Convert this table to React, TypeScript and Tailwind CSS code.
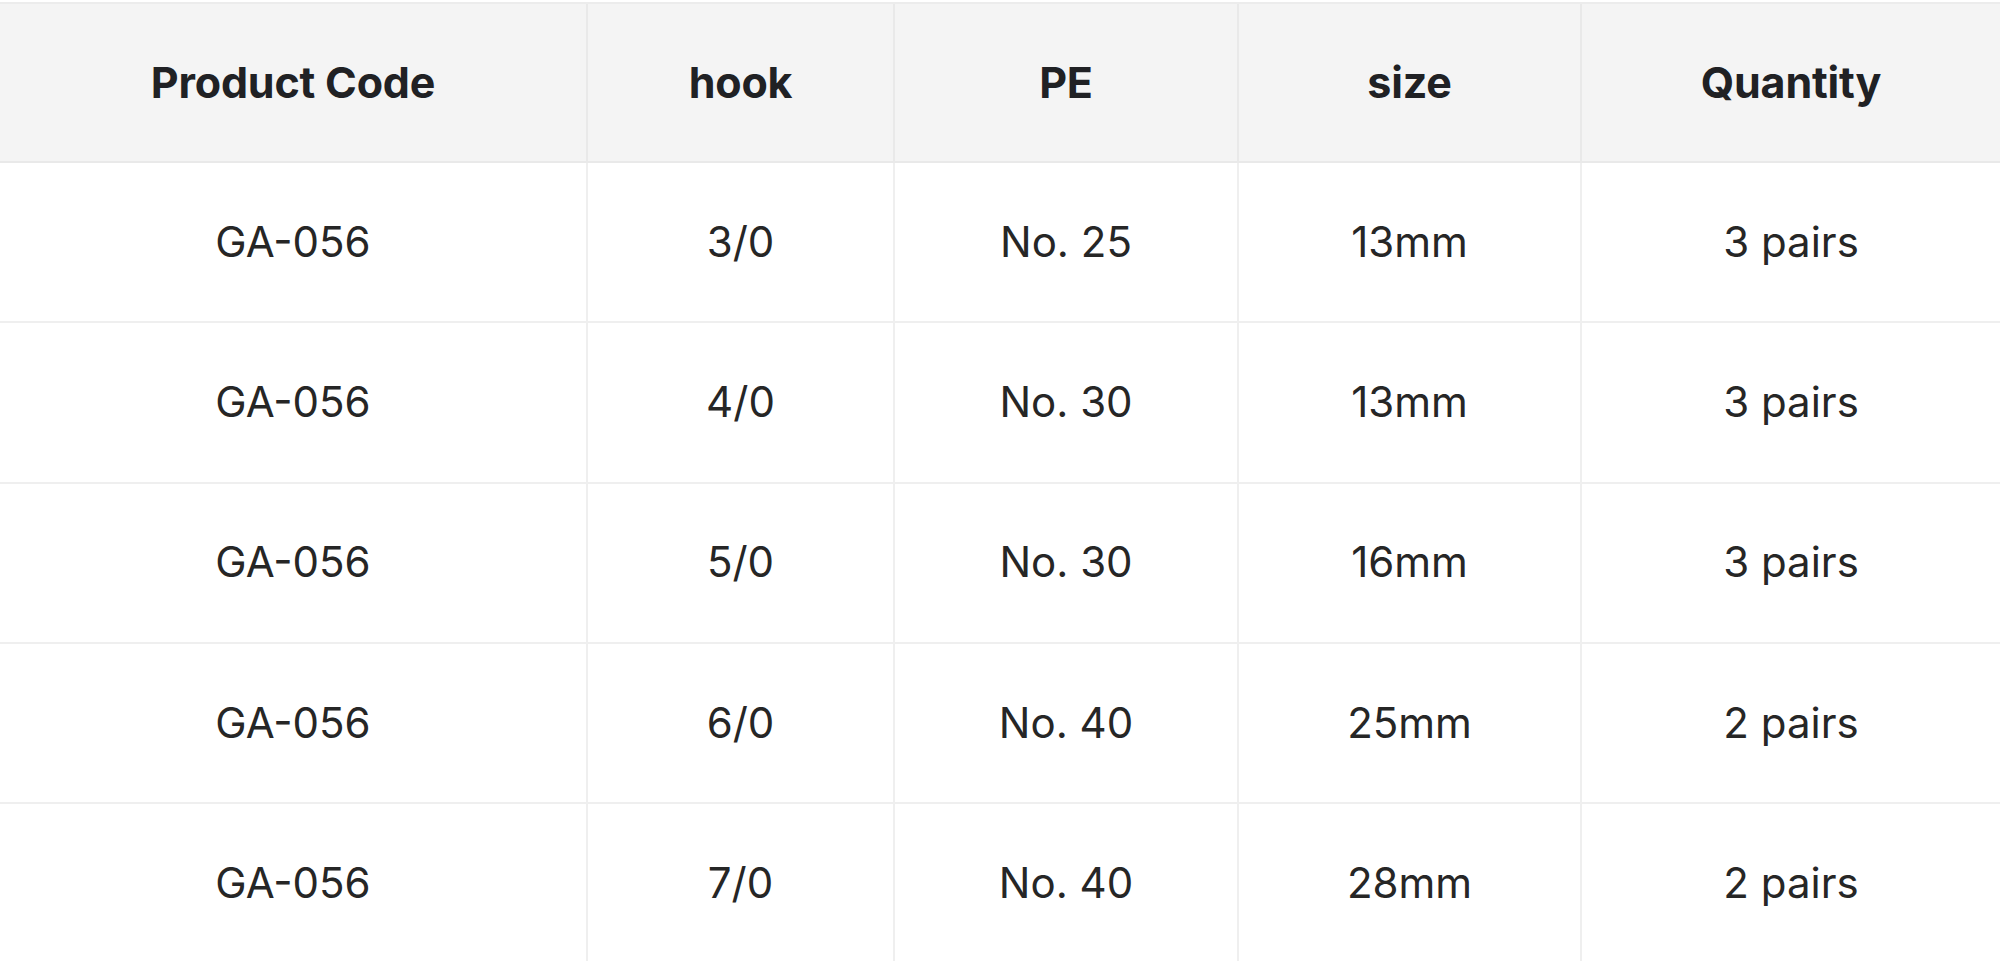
import React from "react";

const headers = ["Product Code", "hook", "PE", "size", "Quantity"];
const rows = [
  ["GA-056", "3/0", "No. 25", "13mm", "3 pairs"],
  ["GA-056", "4/0", "No. 30", "13mm", "3 pairs"],
  ["GA-056", "5/0", "No. 30", "16mm", "3 pairs"],
  ["GA-056", "6/0", "No. 40", "25mm", "2 pairs"],
  ["GA-056", "7/0", "No. 40", "28mm", "2 pairs"],
];

export default function App() {
  return (
    <div
      className="w-[2000px] h-[961px] overflow-hidden bg-white pt-[2px]"
      style={{ fontFamily: "Inter, 'Noto Sans', sans-serif" }}
    >
      <div className="grid grid-cols-[588px_307px_344px_343px_1fr] border-t-2 border-[#ececec]">
        {headers.map((h, i) => (
          <div
            key={h}
            className={`h-[159px] flex items-center justify-center bg-[#f4f4f4] border-b-2 border-[#e9e9e9] text-[43px] font-bold text-[#202124] tracking-[-0.2px] ${
              i < 4 ? "border-r-2" : ""
            }`}
          >
            {h}
          </div>
        ))}
        {rows.map((r, ri) =>
          r.map((c, ci) => (
            <div
              key={`${ri}-${ci}`}
              className={`h-[160.3px] flex items-center justify-center pb-[2px] bg-white border-b-2 border-[#efefef] text-[42px] font-normal text-[#262626] ${
                ci < 4 ? "border-r-2" : ""
              }`}
            >
              {c}
            </div>
          ))
        )}
      </div>
    </div>
  );
}
